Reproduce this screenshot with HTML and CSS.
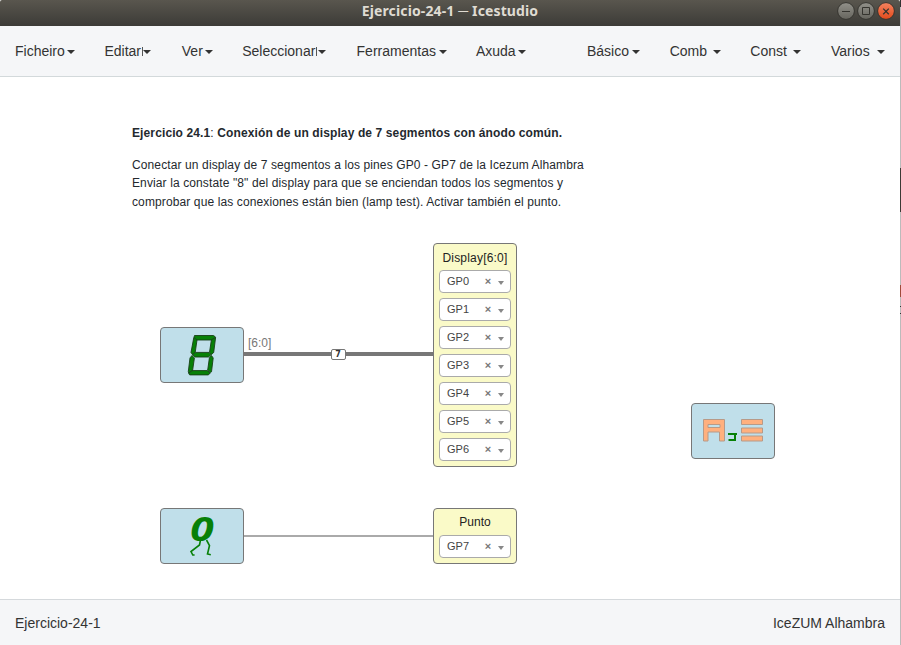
FILE: index.html
```
<!DOCTYPE html>
<html lang="gl">
<head>
<meta charset="utf-8">
<title>Ejercicio-24-1 ─ Icestudio</title>
<link rel="stylesheet" href="styles.css">
</head>
<body>
<div class="window">
  <header class="titlebar">
    <h1>Ejercicio-24-1 ─ Icestudio</h1>
    <div class="controls">
      <svg width="58" height="20" viewBox="0 0 58 20">
        <defs>
          <linearGradient id="grey" x2="0" y2="1"><stop stop-color="#92918a"/><stop offset="1" stop-color="#66655e"/></linearGradient>
          <linearGradient id="orange" x2="0" y2="1"><stop stop-color="#f58360"/><stop offset="1" stop-color="#e24a1b"/></linearGradient>
        </defs>
        <g stroke="#35342f">
          <circle cx="9" cy="10" r="8.4" fill="url(#grey)"/>
          <circle cx="29" cy="10" r="8.4" fill="url(#grey)"/>
          <circle cx="49" cy="10" r="8.4" fill="url(#orange)"/>
          <path d="M5 10.5h8M25.5 6.500h7v7h-7z" fill="none"/>
          <path d="M46.2 7.600l5.600 5.600m0-5.600l-5.600 5.600" stroke-width="1.300"/>
        </g>
      </svg>
    </div>
  </header>
  <nav class="menubar">
    <div class="menu">
      <a class="item w60">Ficheiro<i class="caret"></i></a>
      <a class="item w47"><span class="tick">Editar</span><i class="caret"></i></a>
      <a class="item w31">Ver<i class="caret"></i></a>
      <a class="item w84"><span class="tick">Seleccionar</span><i class="caret"></i></a>
      <a class="item w90">Ferramentas<i class="caret"></i></a>
      <a class="item w50">Axuda<i class="caret"></i></a>
    </div>
    <div class="menu">
      <a class="item w53">Básico<i class="caret"></i></a>
      <a class="item w51">Comb<i class="caret"></i></a>
      <a class="item w51">Const<i class="caret"></i></a>
      <a class="item w54">Varios<i class="caret"></i></a>
    </div>
  </nav>
  <main class="canvas">
    <section class="note">
      <p class="head"><b>Ejercicio 24.1</b>: <b>Conexión de un display de 7 segmentos con ánodo común.</b></p>
      <p>Conectar un display de 7 segmentos a los pines GP0 - GP7 de la Icezum Alhambra</p>
      <p>Enviar la constate "8" del display para que se enciendan todos los segmentos y</p>
      <p>comprobar que las conexiones están bien (lamp test). Activar también el punto.</p>
    </section>
    <div class="wire bus"></div>
    <div class="wire thin"></div>
    <span class="range">[6:0]</span>
    <span class="size">7</span>
    <div class="block eight">
      <svg width="82" height="54" viewBox="161 328 82 54">
        <g fill="#078007" stroke="#173f17" stroke-width=".9" stroke-linejoin="round">
          <path d="M194.500 335.500h19l2 1.500-3 3h-15.500l-3-2.500z"/>
          <path d="M193.800 337.500l3.200 2.500-1.800 12.500-2.600 2.200-1.600-2.200z"/>
          <path d="M215.600 337.500l-1.900 15-2.200 2-2-2.200 1.900-12.500z"/>
          <path d="M192.600 354.700l2.700-2.300h13.700l2.200 2.300-2.700 2.300h-13.700z"/>
          <path d="M192 355.500l2.400 2.500-1.800 12.500-3.900 2.500-.4-1.400 1.700-13.700z"/>
          <path d="M211.500 355.500l1.700 2.500-1.700 13.800-1 .8-2.800-2.500 1.700-12.300z"/>
          <path d="M192 370.600h15.500l2.700 2.600-2 1.700h-18.500l-1-1.500z"/>
        </g>
      </svg>
    </div>
    <div class="block zero">
      <span class="digit">0</span>
      <svg width="82" height="54" viewBox="161 509 82 54">
        <path d="M200.500 540l-1 5-8.500 6.500 1.800 3.500h1.800M206.500 540l3 5.500-2 8.500 3.300.7" fill="none" stroke="#078007" stroke-width="1.600"/>
      </svg>
    </div>
    <div class="block logo">
      <svg width="82" height="54" viewBox="692 404 82 54">
        <path d="M703.500 419.500h21v21.500h-5v-9h-11.500v9h-4.500zM708 424.500v3h12v-3zM741.500 419.500h21v5h-21zM741.500 428h21v5h-21zM741.500 436h21v5h-21z" fill="#ffb07e" fill-rule="evenodd" stroke="#b79a88"/>
        <path d="M728 434h9M728.500 440h6.500v-6" fill="none" stroke="#078007" stroke-width="2"/>
      </svg>
    </div>
    <div class="port display">
      <h2>Display[6:0]</h2>
      <div class="select">GP0<b>×</b><i></i></div>
      <div class="select">GP1<b>×</b><i></i></div>
      <div class="select">GP2<b>×</b><i></i></div>
      <div class="select">GP3<b>×</b><i></i></div>
      <div class="select">GP4<b>×</b><i></i></div>
      <div class="select">GP5<b>×</b><i></i></div>
      <div class="select">GP6<b>×</b><i></i></div>
    </div>
    <div class="port punto">
      <h2>Punto</h2>
      <div class="select">GP7<b>×</b><i></i></div>
    </div>
  </main>
  <footer class="status"><span>Ejercicio-24-1</span><span>IceZUM Alhambra</span></footer>
</div>
<div class="edge"></div>
</body>
</html>
```
FILE: styles.css
```
* { box-sizing: border-box; }
body {
  margin: 0;
  display: flex;
  width: 901px;
  height: 645px;
  overflow: hidden;
  background: #fff;
  color: #333;
  font: 14px "Liberation Sans", Arial, sans-serif;
}
.window { width: 900px; height: 645px; display: flex; flex-direction: column; }
.edge {
  width: 1px;
  background: linear-gradient(#333 0 7px, #bbb 7px 168px, #3b3a35 168px 212px, #bbb 212px 285px, #a04a3a 285px 297px, #bbb 297px 306px, #333 306px 307px, #bbb 307px 313px, #333 313px 314px, #bbb 314px);
}
.titlebar {
  height: 26px;
  display: grid;
  grid-template-columns: 1fr auto 1fr;
  background: linear-gradient(#59564e, #3c3b37);
  border-radius: 2px 2px 0 0;
}
.titlebar h1 {
  grid-column: 2;
  margin: 0;
  color: #dfdbd2;
  font: bold 14px/22px "Noto Sans", sans-serif;
  letter-spacing: .13px;
  white-space: nowrap;
}
.controls { justify-self: end; padding: 1px 5px 0 0; }
.controls svg { display: block; }
.menubar {
  height: 51px;
  display: flex;
  justify-content: space-between;
  padding: 0 15px;
  background: #f5f6f8;
  border-bottom: 1px solid #d3d9db;
}
.menu { display: flex; gap: 29.400px; }
.menu + .menu { gap: 29.700px; }
.item { display: flex; align-items: center; justify-content: space-between; white-space: nowrap; }
.caret { width: 8px; border: 4px solid transparent; border-top-color: #333; border-bottom: 0; margin-top: 1px; flex: none; }
.tick { display: flex; align-items: center; margin-right: -2px; }
.tick::after { content: ""; width: 1px; height: 9px; margin: 1px 0 0 1px; background: #555; }
.w60 { width: 60px; }
.w47 { width: 47px; }
.w31 { width: 31px; margin-left: 1px; }
.w84 { width: 84px; }
.w90 { width: 90px; margin-left: 1px; }
.w50 { width: 50px; }
.w53 { width: 53px; }
.w51 { width: 51px; }
.w54 { width: 54px; }
.canvas { position: relative; height: 522px; }
.note { padding: 46px 0 0 132px; font-size: 12px; line-height: 18.400px; letter-spacing: .115px; color: #24292e; white-space: nowrap; }
.note p { margin: 0; width: max-content; }
.note .head { line-height: 20px; margin-bottom: 13px; }
.block, .port { position: absolute; border: 1px solid #777; border-radius: 4px; }
.block { width: 84px; height: 56px; background: #c0dfea; }
.block svg { display: block; }
.eight { left: 160px; top: 250px; }
.zero { left: 160px; top: 431px; }
.logo { left: 691px; top: 326px; }
.digit { position: absolute; left: 0; top: -2px; width: 82px; text-align: center; color: #078007; font: italic bold 34px/42px "Open Sans", sans-serif; transform: scaleX(1.250); }
.wire { position: absolute; left: 244px; width: 189px; }
.bus { top: 275px; height: 4px; background: #777; }
.thin { top: 458px; height: 2px; background: #aaa; }
.range { position: absolute; left: 248px; top: 258px; font-size: 12px; line-height: 16px; color: #777; }
.size { position: absolute; left: 331px; top: 272px; width: 15px; height: 11px; background: #fff; border: 1px solid #777; border-radius: 2px; font: bold 8px/10px "DejaVu Sans", sans-serif; text-align: center; padding-right: 1px; }
.port { left: 433px; width: 84px; padding: 5px; background: #fafac8; display: flex; flex-direction: column; gap: 5px; }
.display { top: 166px; height: 224px; }
.display h2 { position: relative; top: 1px; letter-spacing: .2px; }
.punto { top: 431px; height: 56px; }
.port h2 { margin: 0; font: 12px/16px "Liberation Sans", sans-serif; color: #222; text-align: center; white-space: nowrap; }
.select { height: 23px; flex: none; display: flex; align-items: center; padding: 0 6px 2px 7px; background: #fff; border: 1px solid #aaa; border-radius: 4px; font-size: 11px; color: #444; }
.select b { margin-left: auto; width: 8px; text-align: center; color: #777; }
.select i { margin: 5px 0 0 6px; border: 3.500px solid transparent; border-top: 4px solid #888; border-bottom: 0; }
.status { height: 46px; display: flex; align-items: center; justify-content: space-between; padding: 1px 15px 1px; background: #f5f6f8; border-top: 1px solid #d5d9dc; }
```
